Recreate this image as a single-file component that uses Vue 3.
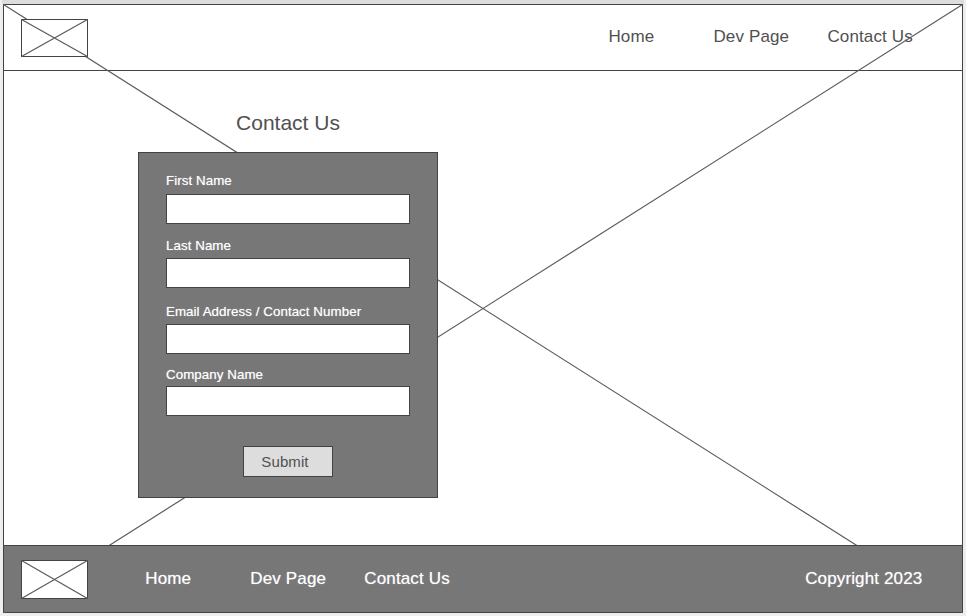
<script setup>
const links = ['Home', 'Dev Page', 'Contact Us']
const fields = [
  { id: 'first', label: 'First Name' },
  { id: 'last', label: 'Last Name' },
  { id: 'contact', label: 'Email Address / Contact Number' },
  { id: 'company', label: 'Company Name' },
]
</script>

<template>
  <div class="canvas">
    <div class="page">
      <svg class="cross" viewBox="0 0 960 609" aria-hidden="true">
        <path d="M.5 .5L959.5 608.5M.5 608.5L959.5 .5" />
      </svg>
      <header class="bar header">
        <svg class="logo" viewBox="0 0 67 38" width="67" height="38">
          <rect x=".5" y=".5" width="66" height="37" />
          <path d="M.5 .5L66.5 37.5M.5 37.5L66.5 .5" />
        </svg>
        <nav class="nav">
          <a v-for="l in links" :key="l">{{ l }}</a>
        </nav>
      </header>
      <main class="main">
        <h1>Contact Us</h1>
        <form class="card" @submit.prevent>
          <div v-for="f in fields" :key="f.id" class="field" :class="f.id">
            <label :for="f.id">{{ f.label }}</label>
            <input :id="f.id" type="text" />
          </div>
          <button type="submit">Submit</button>
        </form>
      </main>
      <footer class="bar footer">
        <svg class="logo" viewBox="0 0 67 39" width="67" height="39">
          <rect x=".5" y=".5" width="66" height="38" />
          <path d="M.5 .5L66.5 38.5M.5 38.5L66.5 .5" />
        </svg>
        <nav class="nav">
          <a v-for="l in links" :key="l">{{ l }}</a>
        </nav>
        <span class="copy">Copyright 2023</span>
      </footer>
    </div>
  </div>
</template>

<style>
body {
  background: #eee;
}
</style>

<style scoped>
* {
  box-sizing: border-box;
}
.canvas {
  height: 616px;
  padding: 4px 3px 3px;
  overflow: hidden;
  background: linear-gradient(#ddd, #ddd) 2px 0 / 962px 4px no-repeat, #eee;
  font-family: "Liberation Sans", Arial, sans-serif;
  color: #505050;
}
.page {
  position: relative;
  display: flex;
  flex-direction: column;
  width: 960px;
  height: 609px;
  border: 1px solid #434343;
  background: #fff;
}
.cross {
  position: absolute;
  top: -1px;
  left: -1px;
  width: 960px;
  height: 609px;
}
.cross path,
.logo path {
  fill: none;
  stroke: #5c5c5c;
  stroke-width: 1.2;
}
.logo {
  position: relative;
  flex: none;
}
.logo rect {
  fill: #fff;
  stroke: #434343;
}
.bar {
  display: flex;
  flex: none;
  align-items: flex-start;
  padding-left: 17px;
  font-size: 17px;
  line-height: 20px;
  letter-spacing: 0.14px;
}
.nav {
  display: grid;
  grid-template-columns: 105px 114px auto;
}
.header {
  height: 66px;
  padding-top: 14px;
  border-bottom: 1px solid #434343;
}
.header .nav {
  margin: 8px 0 0 520.4px;
}
.main {
  position: relative;
  flex: 1;
  padding-left: 134px;
}
h1 {
  width: 300px;
  margin: 0;
  padding: 40px 0 17px;
  font-size: 21px;
  line-height: 24px;
  font-weight: 400;
  text-align: center;
}
.card {
  display: flex;
  flex-direction: column;
  width: 300px;
  height: 346px;
  padding: 20px 27px 0;
  border: 1px solid #434343;
  background: #777;
}
.field {
  display: flex;
  flex-direction: column;
  justify-content: flex-end;
}
.first {
  height: 51px;
}
.last {
  height: 64px;
}
.contact {
  height: 66px;
}
.company {
  height: 62px;
}
label {
  margin-bottom: 4px;
  font-size: 13.33px;
  line-height: 16px;
  letter-spacing: 0.06px;
  color: #fff;
  text-shadow: 0 0 1px rgba(255, 255, 255, 0.6);
}
.first label {
  margin-bottom: 5px;
}
.company label {
  margin-bottom: 3px;
}
input {
  height: 30px;
  margin: 0;
  padding: 0 6px;
  border: 1px solid #434343;
  border-radius: 0;
  background: #fff;
}
button {
  align-self: flex-start;
  width: 90px;
  height: 31px;
  margin: 30px 0 0 77px;
  padding: 0 6px 0 0;
  border: 1px solid #434343;
  border-radius: 0;
  background: #ddd;
  color: #505050;
  font: 15px/29px "Liberation Sans", Arial, sans-serif;
  letter-spacing: 0.1px;
}
.footer {
  position: relative;
  height: 67px;
  padding-top: 14px;
  border-top: 1px solid #434343;
  background: #777;
  color: #fff;
  text-shadow: 0 0 1px rgba(255, 255, 255, 0.6);
}
.footer .nav {
  margin: 9px 0 0 57.3px;
}
.copy {
  margin: 9px 39.6px 0 auto;
}
</style>
